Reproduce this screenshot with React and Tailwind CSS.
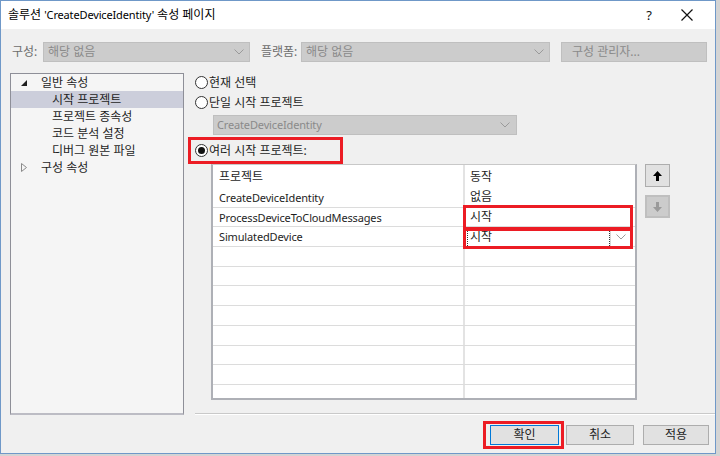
import React from "react";

const F = "font-['Noto_Sans','Noto_Sans_CJK_KR',sans-serif]";

function L({ children }) {
  return <span className="text-[11px] tracking-[-0.15px]">{children}</span>;
}

function Chevron({ className = "" }) {
  return (
    <svg width="10" height="6" viewBox="0 0 10 6" className={className}>
      <polyline points="0.5,0.5 5,5 9.5,0.5" fill="none" stroke="#9a9a9a" strokeWidth="1" />
    </svg>
  );
}

function Radio({ checked }) {
  return (
    <span className="w-[13px] h-[13px] rounded-full border border-[#333333] bg-white flex items-center justify-center shrink-0">
      {checked && <span className="w-[7px] h-[7px] rounded-full bg-[#111111]" />}
    </span>
  );
}

function DisabledCombo({ w, text }) {
  return (
    <div className={`${w} h-[20px] bg-[#cccccc] border border-[#bfbfbf] flex items-center justify-between pl-[4px] pr-[5px]`}>
      <span className="text-[#8a8a8a]">{text}</span>
      <Chevron />
    </div>
  );
}

function TreeRow({ children, selected, indent, tri }) {
  return (
    <div className={`h-[17px] flex items-center ${selected ? "bg-[#cccedb]" : ""}`}>
      {tri === "open" && (
        <svg width="6" height="6" viewBox="0 0 6 6" className="ml-[10px] mr-[14px]">
          <polygon points="6,0 6,6 0,6" fill="#1e1e1e" />
        </svg>
      )}
      {tri === "closed" && (
        <svg width="6" height="9" viewBox="0 0 6 9" className="ml-[10px] mr-[14px]">
          <polygon points="0.5,0.5 5.5,4.5 0.5,8.5" fill="none" stroke="#8a8a8a" strokeWidth="1" />
        </svg>
      )}
      {indent && <span className="w-[41px] shrink-0" />}
      <span className="text-[#1e1e1e]">{children}</span>
    </div>
  );
}

function TableRow({ left, right, h = "h-[19.7px]", border = true, rightClass = "" }) {
  return (
    <div className={`${h} flex ${border ? "border-b border-[#dcdcdc]" : ""}`}>
      <div className="w-[252px] pl-[6px] flex items-center border-r-2 border-[#e3e3e3] text-[#1e1e1e]">{left}</div>
      <div className={`flex-1 flex items-center ${rightClass}`}>{right}</div>
    </div>
  );
}

export default function App() {
  const emptyRows = Array.from({ length: 7 });
  return (
    <div className={`w-[720px] h-[456px] bg-[#d4d4d4] flex ${F} text-[12px] leading-none`}>
      <div className="w-[716px] h-[454px] border border-[#6f98c8] bg-[#f0f0f0] flex flex-col">
        {/* title bar */}
        <div className="h-[28px] bg-white flex items-center shrink-0">
          <span className="ml-[7px] text-[#000000] text-[12px]">
            솔루션 <L>'CreateDeviceIdentity'</L> 속성 페이지
          </span>
          <span className="ml-auto text-[13px] text-[#111111] w-[12px] text-center">?</span>
          <svg width="12" height="12" viewBox="0 0 12 12" className="ml-[26px] mr-[22px]">
            <path d="M0.5 0.5 L11.5 11.5 M11.5 0.5 L0.5 11.5" stroke="#111111" strokeWidth="1.2" />
          </svg>
        </div>

        {/* toolbar */}
        <div className="mt-[13px] h-[20px] flex items-center shrink-0">
          <span className="ml-[11px] w-[31px] text-[#6d6d6d]">구성:</span>
          <DisabledCombo w="w-[207px]" text="해당 없음" />
          <span className="ml-[11px] w-[40px] text-[#6d6d6d]">플랫폼:</span>
          <DisabledCombo w="w-[249px]" text="해당 없음" />
          <div className="ml-[11px] w-[146px] h-[20px] bg-[#cccccc] border border-[#bfbfbf] flex items-center pl-[10px] text-[#8a8a8a]">
            구성 관리자...
          </div>
        </div>

        {/* main */}
        <div className="mt-[11px] h-[342px] flex shrink-0">
          {/* tree */}
          <div className="ml-[9px] w-[174px] h-[342px] bg-[#f5f5f5] border border-[#8e8f98] border-b-2 border-b-[#bcbcc4]">
            <TreeRow tri="open">일반 속성</TreeRow>
            <TreeRow selected indent>시작 프로젝트</TreeRow>
            <TreeRow indent>프로젝트 종속성</TreeRow>
            <TreeRow indent>코드 분석 설정</TreeRow>
            <TreeRow indent>디버그 원본 파일</TreeRow>
            <TreeRow tri="closed">구성 속성</TreeRow>
          </div>

          {/* right */}
          <div className="ml-[4px] flex-1 flex flex-col">
            <div className="h-[19px] flex items-center pl-[7px] gap-[1px]">
              <Radio />
              <span className="text-[#1e1e1e]">현재 선택</span>
            </div>
            <div className="h-[21px] flex items-center pl-[7px] gap-[1px]">
              <Radio />
              <span className="text-[#1e1e1e]">단일 시작 프로젝트</span>
            </div>
            <div className="mt-[2px] ml-[25px] w-[304px] h-[20px] bg-[#cccccc] border border-[#bfbfbf] flex items-center justify-between pl-[3px] pr-[6px]">
              <span className="text-[#8a8a8a]"><L>CreateDeviceIdentity</L></span>
              <Chevron />
            </div>
            <div className="mt-[2px] w-[155px] h-[27px] border-[3px] border-[#ec1c24] flex items-center pl-[4px] gap-[1px]">
              <Radio checked />
              <span className="text-[#1e1e1e]">여러 시작 프로젝트:</span>
            </div>

            <div className="flex">
              {/* table */}
              <div className="relative ml-[23px] w-[426px] h-[236px] bg-white border-t border-t-[#c8c8c8] border-x-2 border-x-[#aeb0b6] border-b-2 border-b-[#aeb0b6] flex flex-col">
                <TableRow h="h-[23px]" border={false} left="프로젝트" right={<span className="pl-[5px] text-[#1e1e1e]">동작</span>} />
                <TableRow left={<L>CreateDeviceIdentity</L>} right={<span className="pl-[5px] text-[#1e1e1e]">없음</span>} />
                <TableRow left={<L>ProcessDeviceToCloudMessages</L>} right={<span className="pl-[5px] text-[#1e1e1e]">시작</span>} />
                <TableRow
                  left={<L>SimulatedDevice</L>}
                  right={
                    <div className="flex-1 h-full flex items-center">
                      <div className="ml-[2px] w-[143px] h-full border-x border-dotted border-[#333333] flex items-center pl-[2px] text-[#1e1e1e]">시작</div>
                      <div className="w-[20px] h-full flex items-center justify-center bg-white border-l border-[#d8d8d8]">
                        <Chevron />
                      </div>
                    </div>
                  }
                />
                {emptyRows.map((_, i) => (
                  <TableRow key={i} left="" right="" />
                ))}
                <div className="flex-1 flex">
                  <div className="w-[252px] border-r-2 border-[#e3e3e3]" />
                </div>

                {/* annotations */}
                <div className="absolute left-[250px] top-[40px] w-[170px] h-[25px] border-[3px] border-[#ec1c24]" />
                <div className="absolute left-[250px] top-[63px] w-[170px] h-[21px] border-[3px] border-[#ec1c24]" />
              </div>

              {/* up/down */}
              <div className="ml-[8px] flex flex-col">
                <div className="w-[25px] h-[23px] bg-[#e1e1e1] border border-[#adadad] flex items-center justify-center">
                  <svg width="9" height="10" viewBox="0 0 9 10">
                    <polygon points="4.5,0 9,5 6,5 6,10 3,10 3,5 0,5" fill="#000000" />
                  </svg>
                </div>
                <div className="mt-[8px] w-[25px] h-[23px] bg-[#cccccc] border-2 border-[#bfbfbf] flex items-center justify-center">
                  <svg width="9" height="10" viewBox="0 0 9 10">
                    <polygon points="4.5,10 9,5 6,5 6,0 3,0 3,5 0,5" fill="#9a9a9a" />
                  </svg>
                </div>
              </div>
            </div>

            <div className="mt-auto ml-[7px] h-[2px] border-t border-[#c9c9c9] border-b border-b-white" />
          </div>
        </div>

        {/* buttons */}
        <div className="mt-[10px] flex items-center shrink-0 pl-[489px]">
          <div className="relative">
            <div className="w-[69px] h-[20px] bg-[#e1e1e1] border border-[#0078d7] flex items-center justify-center text-[#1e1e1e]">확인</div>
            <div className="absolute -left-[7px] -top-[4px] w-[81px] h-[28px] border-[3px] border-[#ec1c24]" />
          </div>
          <div className="ml-[7px] w-[68px] h-[20px] bg-[#e1e1e1] border border-[#adadad] flex items-center justify-center text-[#1e1e1e]">취소</div>
          <div className="ml-[9px] w-[66px] h-[20px] bg-[#e1e1e1] border border-[#adadad] flex items-center justify-center text-[#1e1e1e]">적용</div>
        </div>
      </div>
    </div>
  );
}
